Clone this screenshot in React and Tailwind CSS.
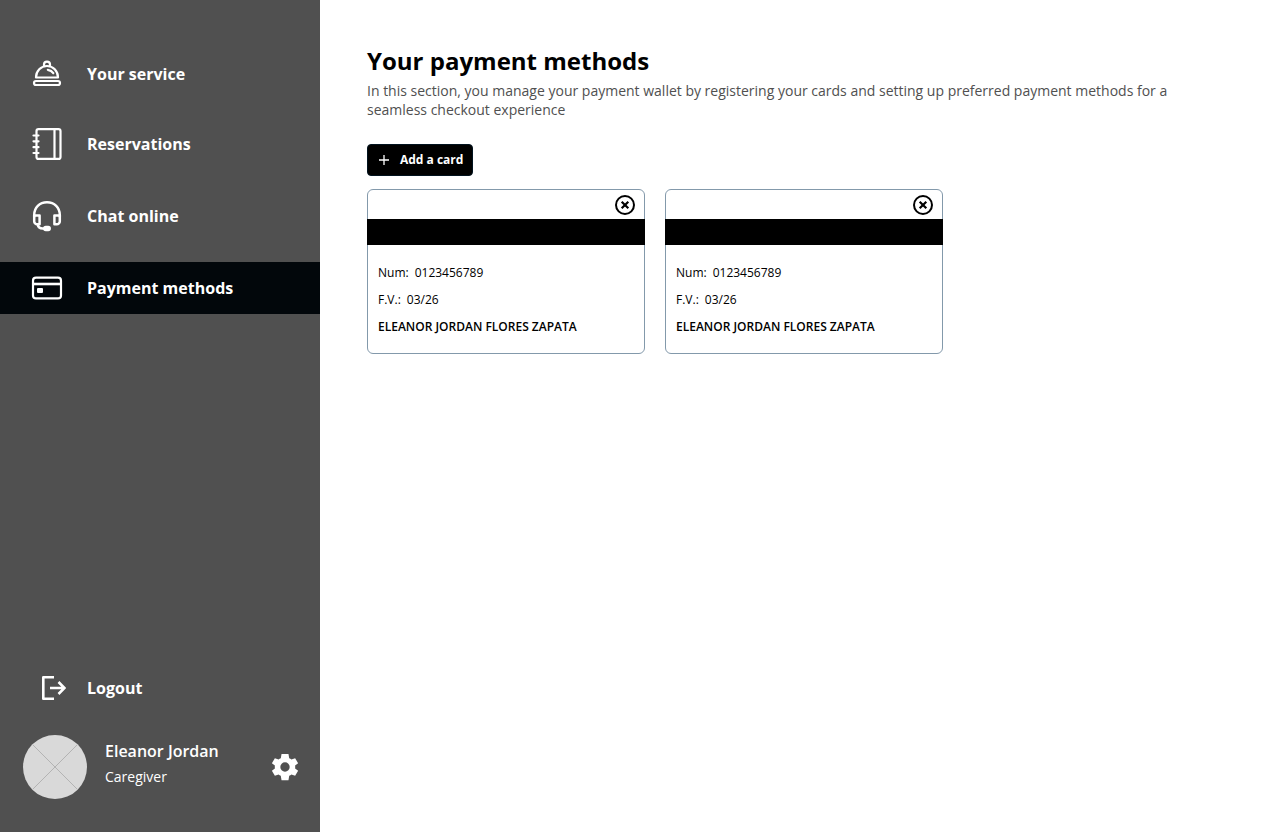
import React from "react";

function BellIcon() {
  return (
    <svg className="h-7 w-8 shrink-0" viewBox="0 0 32 28" fill="none" stroke="currentColor" strokeWidth="2.200" strokeLinecap="round" strokeLinejoin="round" aria-hidden="true">
      <rect x="3" y="21" width="26" height="4" rx="2" />
      <path d="M5 17.500C5 11 10 6 16 6S27 11 27 17.500Z" />
      <path d="M13 6V4.500a3 2.800 0 0 1 6 0V6" />
      <path d="M16.800 9.800c2.300.4 4.300 1.500 5.500 3.400" />
    </svg>
  );
}

function NotebookIcon() {
  return (
    <svg className="h-8 w-8 shrink-0" viewBox="0 0 32 32" fill="none" stroke="currentColor" strokeWidth="2.200" strokeLinecap="round" strokeLinejoin="round" aria-hidden="true">
      <rect x="5.500" y="1.100" width="24" height="29.800" rx="2" />
      <path d="M23.500 1V31" />
      <path d="M2.500 7.500h5M2.500 13.300h5M2.500 19.200h5M2.500 25h5" />
    </svg>
  );
}

function HeadsetIcon() {
  return (
    <svg className="h-8 w-8 shrink-0" viewBox="0 0 32 32" fill="none" stroke="currentColor" strokeWidth="2.500" strokeLinecap="round" strokeLinejoin="round" aria-hidden="true">
      <path d="M3.200 16.500V15C3.200 7.500 8.500 2.300 16 2.300S28.800 7.500 28.800 15v1.500" />
      <path d="M3.200 15.500H8.600V24.300H6.200a3 3 0 0 1-3-3Z" />
      <path d="M28.800 15.500H23.400V24.300H25.800a3 3 0 0 0 3-3Z" />
      <path d="M6.600 24.500c.5 2.500 1.700 4 5 4H16" />
      <rect x="13.300" y="27" width="5.400" height="3" rx="1.500" fill="currentColor" />
    </svg>
  );
}

function CardIcon() {
  return (
    <svg className="h-8 w-8 shrink-0" viewBox="0 0 32 32" fill="none" stroke="currentColor" strokeWidth="2.200" aria-hidden="true">
      <rect x="2" y="5.700" width="28" height="20.700" rx="3" />
      <path d="M2 12H30" strokeWidth="2.600" />
      <rect x="6" y="16" width="6" height="5" rx="1" fill="currentColor" stroke="none" />
    </svg>
  );
}

function LogoutIcon() {
  return (
    <svg className="h-6 w-6 shrink-0" viewBox="0 0 24 24" fill="none" stroke="currentColor" strokeWidth="2.600" strokeLinejoin="round" aria-hidden="true">
      <path d="M12 1.300H1.300V22.700H12" />
      <path d="M8 12H22.500M16.500 6L22.500 12L16.500 18" strokeLinejoin="miter" />
    </svg>
  );
}

function GearIcon() {
  return (
    <svg className="h-[30px] w-[30px]" viewBox="0 0 32 32" fill="currentColor" aria-hidden="true">
      <path
        fillRule="evenodd"
        d="M12.300 2h7.400l.8 4.600c.9.400 1.700.8 2.400 1.400l3.900-1.400 3.200 5.400-3.200 2.500c.1 1 .1 2 0 3l3.200 2.500-3.200 5.400-3.900-1.400c-.7.600-1.500 1-2.400 1.400l-.8 4.600h-7.400l-.8-4.600c-.9-.4-1.700-.8-2.400-1.400l-3.900 1.400-3.200-5.400 3.200-2.500c-.1-1-.1-2 0-3l-3.200-2.500 3.200-5.400L9.100 8c.7-.6 1.500-1 2.400-1.400ZM16 11a5 5 0 1 0 0 10 5 5 0 0 0 0-10Z"
      />
    </svg>
  );
}

const navItems = [
  { label: "Your service", Icon: BellIcon },
  { label: "Reservations", Icon: NotebookIcon },
  { label: "Chat online", Icon: HeadsetIcon },
  { label: "Payment methods", Icon: CardIcon, active: true },
];

const cards = [
  { id: 1, number: "0123456789", expiry: "03/26", holder: "ELEANOR JORDAN FLORES ZAPATA" },
  { id: 2, number: "0123456789", expiry: "03/26", holder: "ELEANOR JORDAN FLORES ZAPATA" },
];

function Sidebar() {
  return (
    <aside className="flex w-80 shrink-0 flex-col bg-[#505050] pt-[50px] pb-[33px] text-white">
      <nav>
        <ul className="flex flex-col gap-5">
          {navItems.map(({ label, Icon, active }) => (
            <li key={label}>
              <a
                href="#"
                aria-current={active ? "page" : undefined}
                className={`flex items-center gap-6 px-[31px] py-[10px] text-base font-bold ${active ? "bg-[#02070b]" : ""}`}
              >
                <Icon />
                {label}
              </a>
            </li>
          ))}
        </ul>
      </nav>
      <div className="mt-auto flex flex-col gap-[35px]">
        <a href="#" className="flex items-center gap-[21px] px-[42px] text-base font-bold">
          <LogoutIcon />
          Logout
        </a>
        <div className="flex items-center pr-5 pl-[23px]">
          <svg className="h-16 w-16 shrink-0" viewBox="0 0 64 64" aria-hidden="true">
            <circle cx="32" cy="32" r="32" fill="#d9d9d9" />
            <path d="M9.400 9.400L54.600 54.600M54.600 9.400L9.400 54.600" stroke="#b3b3b3" />
          </svg>
          <div className="ml-[18px] flex flex-col gap-1 self-start pt-1">
            <p className="text-base leading-6 font-semibold">Eleanor Jordan</p>
            <p className="text-sm leading-5">Caregiver</p>
          </div>
          <button type="button" aria-label="Settings" className="ml-auto">
            <GearIcon />
          </button>
        </div>
      </div>
    </aside>
  );
}

function PaymentCard({ number, expiry, holder }) {
  return (
    <li className="w-[278px] rounded-md border border-[#8399ab] text-xs leading-4 text-black">
      <div className="flex h-[29px] items-center justify-end pr-[9px]">
        <button type="button" aria-label="Remove card">
          <svg className="block h-5 w-5" viewBox="0 0 20 20" fill="none" stroke="currentColor" aria-hidden="true">
            <circle cx="10" cy="10" r="9" strokeWidth="2" />
            <path d="M6.700 6.700L13.300 13.300M13.300 6.700L6.700 13.300" strokeWidth="2.200" />
          </svg>
        </button>
      </div>
      <div className="-mx-px h-[26px] bg-black" />
      <div className="flex flex-col gap-[11px] px-[10px] pt-5 pb-[18px]">
        <p className="flex gap-[6px]">
          <span>Num:</span>
          <span>{number}</span>
        </p>
        <p className="flex gap-[6px]">
          <span>F.V.:</span>
          <span>{expiry}</span>
        </p>
        <p className="font-semibold">{holder}</p>
      </div>
    </li>
  );
}

export default function App() {
  return (
    <div className="flex min-h-screen bg-white font-['Open_Sans',sans-serif]">
      <Sidebar />
      <main className="min-w-0 flex-1 pt-[45px] pr-10 pl-[47px]">
        <h1 className="text-2xl leading-8 font-bold text-black">Your payment methods</h1>
        <p className="mt-1 max-w-[820px] text-sm leading-[19px] text-[#505050]">
          In this section, you manage your payment wallet by registering your cards and setting up preferred payment methods for a seamless checkout experience
        </p>
        <button
          type="button"
          className="mt-[25px] flex h-8 items-center gap-[11px] rounded border border-[#02131f] bg-black pr-[9px] pl-[11px] text-xs font-bold text-white"
        >
          <svg className="h-[10px] w-[10px]" viewBox="0 0 10 10" stroke="currentColor" aria-hidden="true">
            <path d="M5 0V10M0 5H10" strokeWidth="1.300" />
          </svg>
          Add a card
        </button>
        <ul className="mt-[13px] flex flex-wrap gap-5">
          {cards.map((card) => (
            <PaymentCard key={card.id} {...card} />
          ))}
        </ul>
      </main>
    </div>
  );
}
